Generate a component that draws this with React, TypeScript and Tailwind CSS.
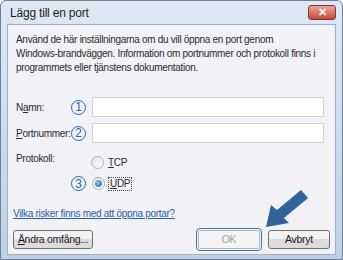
import React from "react";

const font = { fontFamily: '"Liberation Sans", Arial, sans-serif' };

function Num({ n }: { n: string }) {
  return (
    <div className="w-[15px] h-[15px] rounded-full border-[1.5px] border-[#2a66ad] text-[#2a66ad] flex items-center justify-center text-[12px] leading-none tracking-normal">
      {n}
    </div>
  );
}

function Radio({ checked }: { checked?: boolean }) {
  return (
    <div className="w-[13px] h-[13px] rounded-full border border-[#b0b0b0] bg-gradient-to-br from-[#e2e2e2] to-[#ffffff] flex items-center justify-center">
      {checked && <div className="w-[7px] h-[7px] rounded-full bg-[radial-gradient(circle_at_40%_35%,#8fc3f0,#1f5c9c)]" />}
    </div>
  );
}

function Btn({ children, className = "" }: { children: React.ReactNode; className?: string }) {
  return (
    <div
      className={`h-[19px] rounded-[3px] border border-[#707070] bg-gradient-to-b from-[#f2f2f2] from-50% to-[#dcdcdc] to-50% flex items-center justify-center text-[10.5px] text-[#1a1a1a] ${className}`}
    >
      {children}
    </div>
  );
}

export default function App() {
  return (
    <div className="w-[343px] h-[260px] bg-white" style={font}>
      <div className="relative w-[343px] h-[260px] rounded-t-[6px] border border-[#6d8098] bg-gradient-to-b from-[#dfe8f3] to-[#bfd0e4] flex flex-col">
        {/* title bar */}
        <div className="h-[23px] flex items-center justify-between pl-[9px] pr-[6px]">
          <span className="text-[12px] text-[#1e1e1e] tracking-[-0.2px]">Lägg till en port</span>
          <div className="w-[28px] h-[15px] rounded-[3px] border border-[#7a3a33] bg-gradient-to-b from-[#e8a69a] to-[#c6453a] flex items-center justify-center text-white text-[11px] font-bold leading-none">
            ✕
          </div>
        </div>
        {/* content */}
        <div className="flex-1 mx-[6px] mb-[4px] bg-[#f2f1f6] border border-[#9fb1c6] flex flex-col text-[10px] text-[#2a2a2a] tracking-[-0.3px]">
          <p className="mt-[8px] ml-[8px] mr-[4px] leading-[14px] whitespace-nowrap">
            Använd de här inställningarna om du vill öppna en port genom
            <br />
            Windows-brandväggen. Information om portnummer och protokoll finns i
            <br />
            programmets eller tjänstens dokumentation.
          </p>
          <div className="mt-[22px] ml-[8px] flex items-center h-[20px]">
            <span className="w-[55px]">N<span className="underline">a</span>mn:</span>
            <Num n="1" />
            <div className="ml-[6px] w-[232px] h-[20px] bg-white border border-[#cfd3da]" />
          </div>
          <div className="mt-[6px] ml-[8px] flex items-center h-[20px]">
            <span className="w-[55px]"><span className="underline">P</span>ortnummer:</span>
            <Num n="2" />
            <div className="ml-[6px] w-[232px] h-[20px] bg-white border border-[#cfd3da]" />
          </div>
          <div className="mt-[9px] ml-[8px] flex">
            <span className="w-[75px] leading-[14px]">Protokoll:</span>
            <div className="flex items-center gap-[4px] mt-[3px]">
              <Radio />
              <span><span className="underline">T</span>CP</span>
            </div>
          </div>
          <div className="mt-[6px] ml-[8px] flex items-center">
            <div className="w-[55px]" />
            <Num n="3" />
            <div className="ml-[6px] flex items-center gap-[3px]">
              <Radio checked />
              <span className="border border-dotted border-[#444] px-[1px] leading-[12px]"><span className="underline">U</span>DP</span>
            </div>
          </div>
          <div className="mt-[17px] ml-[5px] leading-[12px]">
            <span className="text-[#1e63b0] underline">Vilka risker finns med att öppna portar?</span>
          </div>
          <div className="mt-[8px] mx-[5px] flex items-center">
            <Btn className="w-[80px]"><span><span className="underline">Ä</span>ndra omfång...</span></Btn>
            <div className="flex-1" />
            <div className="rounded-[4px] border-[1.5px] border-[#3c76a8] p-[1px]">
              <Btn className="w-[62px] !border-[#b5b5b5] !text-[#a3a3a3] !bg-none bg-[#f4f4f4]">OK</Btn>
            </div>
            <Btn className="w-[62px] ml-[6px]">Avbryt</Btn>
          </div>
        </div>
        {/* arrow overlay */}
        <svg className="absolute left-0 top-0 pointer-events-none" width="343" height="260">
          <polygon points="265,226 270,204 276,209 300,189 307,197 283,217 288,222" fill="#2f639a" />
        </svg>
      </div>
    </div>
  );
}
